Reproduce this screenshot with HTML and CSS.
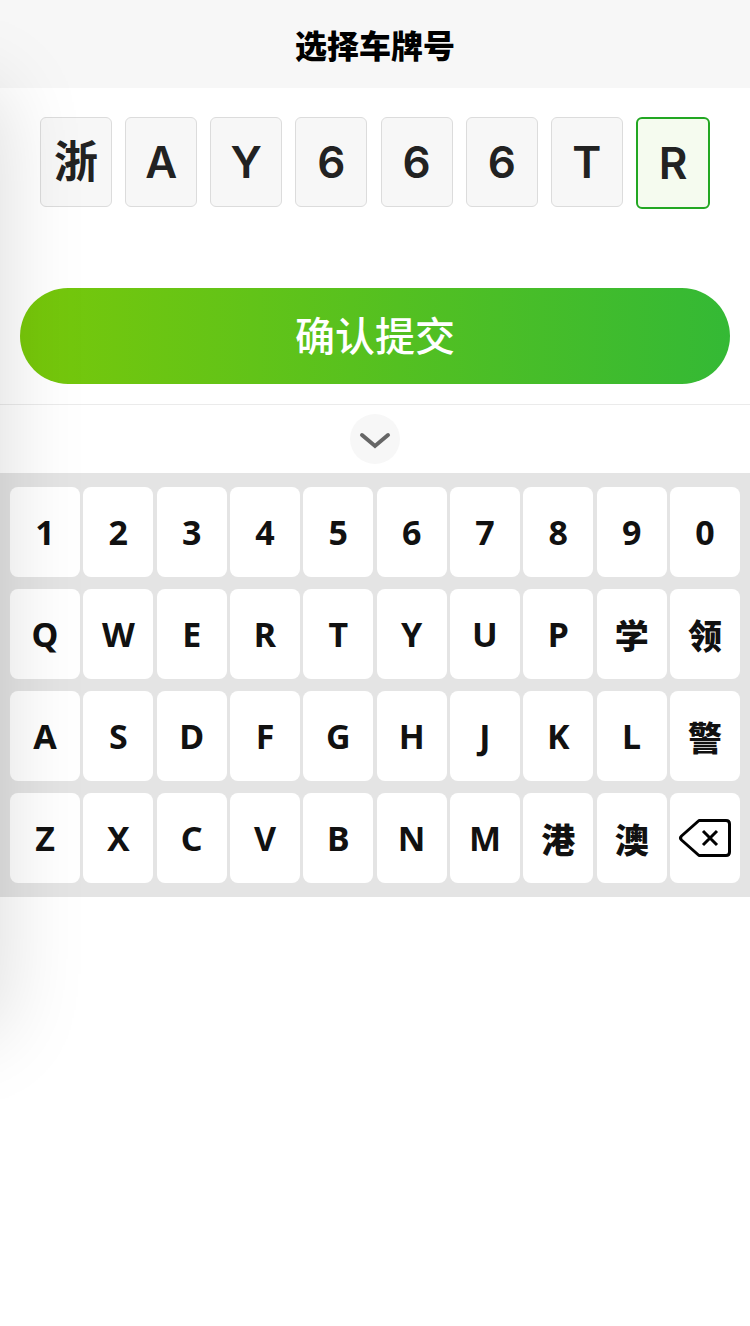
FILE: index.html
```html
<!DOCTYPE html>
<html lang="zh-CN">
<head>
<meta charset="utf-8">
<meta name="viewport" content="width=device-width, initial-scale=1">
<title>选择车牌号</title>
<link rel="stylesheet" href="styles.css">
</head>
<body>
<header class="header"><h1 class="title">选择车牌号</h1></header>
<main>
  <div class="plate">
    <button class="cell" type="button">浙</button>
    <button class="cell" type="button">A</button>
    <button class="cell" type="button">Y</button>
    <button class="cell" type="button">6</button>
    <button class="cell" type="button">6</button>
    <button class="cell" type="button">6</button>
    <button class="cell" type="button">T</button>
    <button class="cell active" type="button">R</button>
  </div>
  <div class="actions"><button class="submit" type="submit">确认提交</button></div>
  <section class="panel">
    <div class="panel-bar">
      <button class="collapse" type="button" aria-label="收起键盘">
        <svg width="50" height="50" viewBox="0 0 50 50" fill="none" stroke="#666" stroke-width="4" stroke-linecap="round"><path d="M12 21 25 32 38 21"/></svg>
      </button>
    </div>
    <div class="keyboard">
      <div class="row">
        <button class="key" type="button">1</button><button class="key" type="button">2</button><button class="key" type="button">3</button><button class="key" type="button">4</button><button class="key" type="button">5</button><button class="key" type="button">6</button><button class="key" type="button">7</button><button class="key" type="button">8</button><button class="key" type="button">9</button><button class="key" type="button">0</button>
      </div>
      <div class="row">
        <button class="key" type="button">Q</button><button class="key" type="button">W</button><button class="key" type="button">E</button><button class="key" type="button">R</button><button class="key" type="button">T</button><button class="key" type="button">Y</button><button class="key" type="button">U</button><button class="key" type="button">P</button><button class="key han" type="button">学</button><button class="key han" type="button">领</button>
      </div>
      <div class="row">
        <button class="key" type="button">A</button><button class="key" type="button">S</button><button class="key" type="button">D</button><button class="key" type="button">F</button><button class="key" type="button">G</button><button class="key" type="button">H</button><button class="key" type="button">J</button><button class="key" type="button">K</button><button class="key" type="button">L</button><button class="key han" type="button">警</button>
      </div>
      <div class="row">
        <button class="key" type="button">Z</button><button class="key" type="button">X</button><button class="key" type="button">C</button><button class="key" type="button">V</button><button class="key" type="button">B</button><button class="key" type="button">N</button><button class="key" type="button">M</button><button class="key han" type="button">港</button><button class="key han" type="button">澳</button><button class="key" type="button" aria-label="删除">
          <svg width="70" height="90" viewBox="0 0 70 90" fill="none" stroke="#000" stroke-width="3" stroke-linejoin="round"><path d="M29 27.500H56Q59.500 27.500 59.500 31V59Q59.500 62.500 56 62.500H29L11.500 47Q9.500 45 11.500 43Z"/><path d="M33 38 47 52M47 38 33 52"/></svg>
        </button>
      </div>
    </div>
  </section>
</main>
<aside class="drawer" aria-hidden="true"></aside>
</body>
</html>
```
FILE: styles.css
```css
* { box-sizing: border-box; }
body {
  margin: 0;
  min-height: 100vh;
  overflow-x: hidden;
  background: #fff;
  font-family: "Noto Sans", "Noto Sans CJK SC", sans-serif;
}
button {
  margin: 0;
  padding: 0;
  border: 0;
  font-family: inherit;
  cursor: pointer;
}
svg { display: block; }
.header {
  display: flex;
  align-items: center;
  justify-content: center;
  height: 88px;
  background: #f7f7f7;
}
.title {
  margin: 0;
  color: #000;
  font: 900 32px/48px "Noto Sans CJK SC", sans-serif;
}
.plate {
  display: flex;
  align-items: flex-start;
  justify-content: space-between;
  padding: 29px 40px 0;
}
.cell {
  width: 72px;
  height: 90px;
  border: 1px solid #dcdcdc;
  border-radius: 6px;
  background: #f7f7f7;
  color: #222;
  font: 600 44px/88px Inter, "Noto Sans CJK SC", sans-serif;
}
.cell.active {
  width: 74px;
  height: 92px;
  border: 2px solid #22a722;
  background: #f5fbef;
}
.actions { padding: 79px 20px 20px; }
.submit {
  display: block;
  width: 100%;
  height: 96px;
  padding-bottom: 4px;
  border-radius: 48px;
  background: linear-gradient(90deg, #78c80a, #34b935);
  color: #fff;
  font: 500 40px/92px "Noto Sans CJK SC", sans-serif;
}
.panel { border-top: 1px solid #ebebeb; }
.panel-bar {
  display: flex;
  justify-content: center;
  padding: 9px 0;
}
.collapse {
  width: 50px;
  height: 50px;
  border-radius: 50%;
  background: #f7f7f7;
}
.keyboard {
  display: grid;
  gap: 12px;
  padding: 14px 10px;
  background: #e4e4e4;
}
.row {
  display: flex;
  justify-content: space-between;
}
.key {
  width: 70px;
  height: 90px;
  border-radius: 8px;
  background: #fff;
  color: #111;
  font-size: 34px;
  font-weight: 700;
  line-height: 90px;
}
.key.han {
  padding-top: 4px;
  font-weight: 900;
  line-height: 86px;
}
.drawer {
  position: fixed;
  top: 90px;
  left: -300px;
  width: 300px;
  height: 940px;
  box-shadow: 0 0 80px rgba(0, 0, 0, 0.15);
  pointer-events: none;
}
```
